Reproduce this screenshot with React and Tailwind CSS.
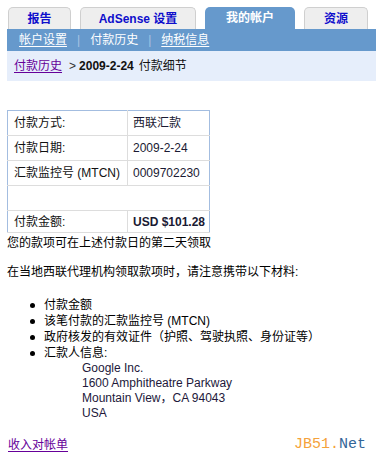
const tabs = [
  { label: "报告", w: "w-[63px]" },
  { label: "AdSense 设置", w: "w-[116px]" },
  { label: "我的帐户", w: "w-[90px]", active: true },
  { label: "资源", w: "w-[64px]" },
];

const rows = [
  { k: "付款方式:", v: "西联汇款" },
  { k: "付款日期:", v: "2009-2-24" },
  { k: "汇款监控号 (MTCN)", v: "0009702230" },
  { empty: true },
  { k: "付款金额:", v: "USD $101.28", bold: true },
];

const items = ["付款金额", "该笔付款的汇款监控号 (MTCN)", "政府核发的有效证件（护照、驾驶执照、身份证等）", "汇款人信息:"];

const App = () => {
  return (
    <div className="relative w-[376px] h-[460px] overflow-hidden bg-white text-[12px] leading-[16px] text-black font-['Liberation_Sans','Noto_Sans_CJK_SC',sans-serif]">
      <div className="pl-[7px] pt-[7px]">
        {/* 标签页 */}
        <div className="flex items-end gap-[9px] pl-[1px] h-[22px]">
          {tabs.map((t) =>
            t.active ? (
              <div
                key={t.label}
                className={`${t.w} h-[22px] flex items-center justify-center rounded-t-[5px] bg-[#6699cc] text-white font-bold`}
              >
                {t.label}
              </div>
            ) : (
              <div
                key={t.label}
                className={`${t.w} h-[22px] flex items-center justify-center rounded-t-[5px] border border-b-0 border-[#cfcfcf] bg-[#eeeeee] text-[#0f0fcc] font-bold`}
              >
                {t.label}
              </div>
            )
          )}
        </div>

        {/* 子导航 */}
        <div className="h-[22px] bg-[#6699cc] flex items-center pl-[12px] text-white whitespace-nowrap">
          <span className="underline underline-offset-2">帐户设置</span>
          <span className="mx-[10px] text-[#a9c4e3]">|</span>
          <span>付款历史</span>
          <span className="mx-[10px] text-[#a9c4e3]">|</span>
          <span className="underline underline-offset-2">纳税信息</span>
        </div>

        {/* 面包屑 */}
        <div className="h-[30px] bg-[#e6eefb] flex items-center pl-[7px] whitespace-nowrap">
          <span className="text-[#660099] underline underline-offset-2">付款历史</span>
          <span className="ml-[7px] text-[#333]">&gt;</span>
          <span className="ml-[3px] font-bold text-[#111]">2009-2-24</span>
          <span className="ml-[5px] text-[#111]">付款细节</span>
        </div>

        {/* 付款表格 */}
        <table className="mt-[29px] border-collapse border border-[#a3bde0] w-[203px]">
          <tbody>
            {rows.map((r, i) =>
              r.empty ? (
                <tr key={i} className="h-[25px]">
                  <td colSpan={2} className="border-b border-[#dddddd]" />
                </tr>
              ) : (
                <tr key={i} className={i === rows.length - 1 ? "h-[22px]" : "h-[25px]"}>
                  <td className="w-[120px] pl-[6px] border-r border-b border-[#dddddd] whitespace-nowrap text-[#111]">
                    {r.k}
                  </td>
                  <td
                    className={`pl-[5px] border-b border-[#dddddd] whitespace-nowrap text-[#1a1a33] ${
                      r.bold ? "font-bold" : ""
                    }`}
                  >
                    {r.v}
                  </td>
                </tr>
              )
            )}
          </tbody>
        </table>

        <p className="mt-[2px]">您的款项可在上述付款日的第二天领取</p>
        <p className="mt-[13px] whitespace-nowrap">在当地西联代理机构领取款项时，请注意携带以下材料:</p>

        <ul className="mt-[17px]">
          {items.map((it) => (
            <li key={it} className="flex items-center whitespace-nowrap">
              <span className="ml-[23px] w-[5px] h-[5px] rounded-full bg-black" />
              <span className="ml-[9px]">{it}</span>
            </li>
          ))}
        </ul>
        <div className="ml-[75px] leading-[15px] text-[#22183a]">
          <div>Google Inc.</div>
          <div>1600 Amphitheatre Parkway</div>
          <div>Mountain View，CA 94043</div>
          <div>USA</div>
        </div>

        <div className="mt-[16px] pl-[1px]">
          <span className="text-[#660099] underline underline-offset-2">收入对帐单</span>
        </div>
      </div>

      {/* 水印 */}
      <div className="absolute right-[10px] bottom-[7px] font-['Liberation_Mono',monospace] text-[15px] leading-[16px]">
        <span className="text-[#f5a23a]">JB51.</span>
        <span className="text-[#336699]">Net</span>
      </div>
    </div>
  );
};

export default App;
